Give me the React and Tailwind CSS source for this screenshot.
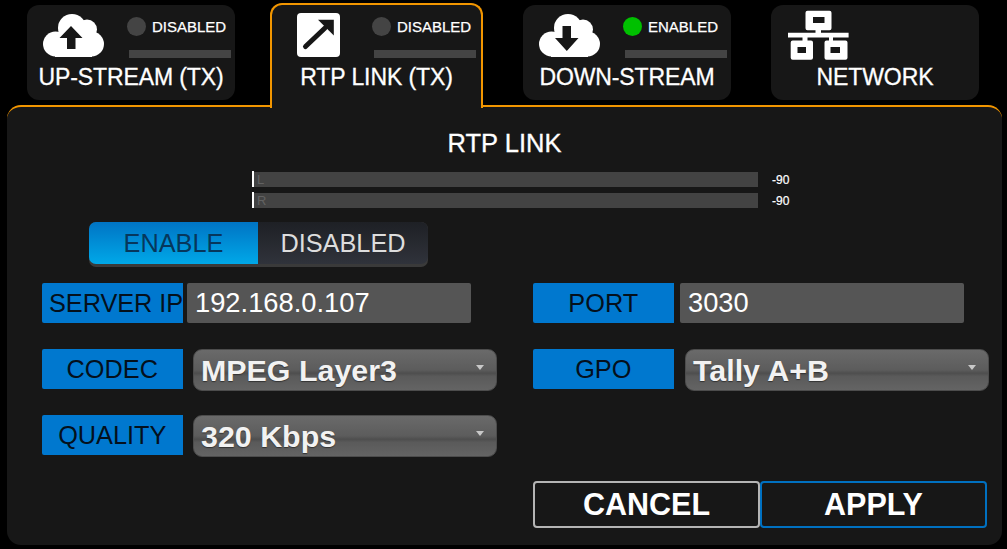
const Cloud = ({ down }) => (
  <svg width="61" height="43" viewBox="0 0 61 43">
    <g fill="#fff">
      <circle cx="29" cy="14" r="14" />
      <circle cx="44" cy="15.5" r="10" />
      <circle cx="12.5" cy="30" r="12.5" />
      <circle cx="48.5" cy="30" r="12.5" />
      <rect x="12" y="18" width="37" height="25" />
    </g>
    <path
      fill="#171717"
      d={
        down
          ? "M23.5 12h8.5v12h7.5L27.8 37 16 24h7.5z"
          : "M28 12l11.5 12H32.5v11H24V24h-7.5z"
      }
    />
  </svg>
);

const ArrowBox = () => (
  <svg width="43" height="44" viewBox="0 0 43 44">
    <rect width="43" height="44" rx="4" fill="#fff" />
    <path d="M8.5 33.5L28 15" stroke="#171717" strokeWidth="5" strokeLinecap="round" fill="none" />
    <path d="M21 6.7h15.8v15.8z" fill="#171717" />
  </svg>
);

const NetworkIcon = () => (
  <svg width="61" height="50" viewBox="0 0 61 50">
    <path
      fill="#fff"
      fillRule="evenodd"
      d="M19.5 0.7h22a2 2 0 0 1 2 2v15.5a2 2 0 0 1-2 2H33v2.6h27.6v4.6H45v3h12.5a2 2 0 0 1 2 2v15.3a2 2 0 0 1-2 2h-19a2 2 0 0 1-2-2V32.4a2 2 0 0 1 2-2H41v-3H19.5v3h3.5a2 2 0 0 1 2 2v15.3a2 2 0 0 1-2 2H4.7a2 2 0 0 1-2-2V32.4a2 2 0 0 1 2-2H14.5v-3H0v-4.6h27.5v-2.6h-8a2 2 0 0 1-2-2V2.7a2 2 0 0 1 2-2zM25 7v6h11.5V7zM9.5 37v6h8.5v-6zM42.5 37v6h9.5v-6z"
    />
  </svg>
);

const Status = ({ on, label }) => (
  <div className="flex flex-col">
    <div className="flex items-center h-[19px]">
      <span className={`w-[19px] h-[19px] rounded-full ${on ? "bg-[#00c000]" : "bg-[#444444]"}`} />
      <span className="ml-[6px] text-[15px] leading-[19px] text-white whitespace-nowrap [-webkit-text-stroke:0.25px_#fff]">{label}</span>
    </div>
    <div className="mt-[14px] ml-[2px] w-[102px] h-[8px] bg-[#444444]" />
  </div>
);

const TabTitle = ({ children, className }) => (
  <div className={`text-[23px] leading-[30px] tracking-[-0.1px] text-white text-center whitespace-nowrap [-webkit-text-stroke:0.3px_#fff] ${className}`}>
    {children}
  </div>
);

const Tab = ({ icon, status, on, label }) => (
  <div className="w-[208px] h-[95px] mt-[5px] rounded-[12px] bg-[#171717] flex flex-col">
    <div className="h-[54px] pt-[12px] flex">
      <div className="ml-[16px] w-[84px] h-[43px] shrink-0 -mt-[3px]">{icon}</div>
      {status && <Status on={on} label={status} />}
    </div>
    <TabTitle className="mt-[3px]">{label}</TabTitle>
  </div>
);

const Label = ({ children, className = "" }) => (
  <div className={`w-[140.5px] h-[40px] shrink-0 rounded-l-[2px] bg-[#0078cf] text-[#04101c] text-[25.3px] leading-[40px] text-center whitespace-nowrap ${className}`}>
    {children}
  </div>
);

const Input = ({ value, className }) => (
  <input
    readOnly
    value={value}
    className={`w-[284px] h-[40px] rounded-[2px] bg-[#555555] text-white text-[27.3px] pl-[8px] outline-none border-0 ${className}`}
  />
);

const Select = ({ value, className = "" }) => (
  <div className={`relative w-[304px] h-[42px] rounded-[9px] border border-[#4c4c4c] bg-[linear-gradient(to_bottom,#6a6a6a_0%,#5c5c5c_50%,#4e4e4e_58%,#5a5a5a_66%,#646464_100%)] text-[#f2f2f2] text-[30.4px] leading-[41px] font-bold pl-[7px] whitespace-nowrap [text-shadow:0_1px_1px_#333] ${className}`}>
    {value}
    <span className="absolute right-[12px] top-[15px] w-0 h-0 border-l-[4.5px] border-r-[4.5px] border-t-[5px] border-l-transparent border-r-transparent border-t-[#c8c8c8]" />
  </div>
);

const Meter = ({ ch }) => (
  <div className="flex items-center h-[16px]">
    <div className="w-[2px] h-[16px] bg-white" />
    <div className="w-[504px] h-[15px] bg-[#434343] text-[#626262] text-[13px] leading-[15px] pl-[3px]">{ch}</div>
    <div className="ml-[14px] text-white text-[12px] leading-[15px] mt-[2px] [-webkit-text-stroke:0.2px_#fff]">-90</div>
  </div>
);

export default function App() {
  return (
    <div className="w-[1007px] h-[549px] bg-black overflow-hidden font-['Liberation_Sans',Arial,sans-serif]">
      <div className="h-[105px] pl-[27px] flex items-start">
        <Tab icon={<Cloud />} status="DISABLED" label="UP-STREAM (TX)" />
        <div className="relative z-10 ml-[35px] w-[213px] h-[105px] mt-[3px] rounded-t-[12px] border-2 border-b-0 border-[#f29600] bg-[#171717] flex flex-col">
          <div className="h-[52px] pt-[8px] flex">
            <div className="ml-[25px] w-[75px] shrink-0">
              <ArrowBox />
            </div>
            <div className="mt-[4px]">
              <Status label="DISABLED" />
            </div>
          </div>
          <TabTitle className="mt-[5px]">RTP LINK (TX)</TabTitle>
        </div>
        <div className="ml-[40px]">
          <Tab icon={<Cloud down />} status="ENABLED" on label="DOWN-STREAM" />
        </div>
        <div className="ml-[40px]">
          <Tab icon={<div className="ml-[1px] -mt-[4px]"><NetworkIcon /></div>} label="NETWORK" />
        </div>
      </div>

      <div className="ml-[7px] w-[995px] h-[440px] rounded-[14px] border-t-2 border-[#f29600] bg-[#171717] flex flex-col">
        <div className="mt-[21px] text-center text-white text-[25.5px] leading-[30px] [-webkit-text-stroke:0.3px_#fff]">RTP LINK</div>
        <div className="mt-[13px] ml-[245px] flex flex-col gap-[5px]">
          <Meter ch="L" />
          <Meter ch="R" />
        </div>
        <div className="mt-[14px] ml-[82px] w-[339px] h-[45px] rounded-[7px] bg-[#3a3a3a] pb-[3px] flex">
          <div className="w-[169px] rounded-l-[7px] bg-[linear-gradient(to_bottom,#0074c4,#00a8e8)] text-[#06375c] text-[25.3px] leading-[42px] text-center">ENABLE</div>
          <div className="flex-1 rounded-r-[7px] bg-[linear-gradient(to_bottom,#1e2025,#30333b)] text-[#dddddd] text-[25.3px] leading-[42px] text-center">DISABLED</div>
        </div>
        <div className="mt-[16px] ml-[35px] grid grid-cols-[491px_1fr] gap-y-[26px]">
          <div className="flex">
            <Label className="pl-[7px] text-left tracking-[-0.05px]">SERVER IP</Label>
            <Input value="192.168.0.107" className="ml-[4.5px]" />
          </div>
          <div className="flex">
            <Label>PORT</Label>
            <Input value="3030" className="ml-[6.5px] w-[283px]" />
          </div>
          <div className="flex h-[40px]">
            <Label>CODEC</Label>
            <Select value="MPEG Layer3" className="ml-[10.5px]" />
          </div>
          <div className="flex h-[40px]">
            <Label>GPO</Label>
            <Select value="Tally A+B" className="ml-[11.5px]" />
          </div>
          <div className="flex h-[40px]">
            <Label>QUALITY</Label>
            <Select value="320 Kbps" className="ml-[10.5px]" />
          </div>
        </div>
        <div className="mt-[26px] ml-[526px] flex">
          <button className="w-[227px] h-[47px] rounded-[4px] border-2 border-[#b4b4b4] text-white text-[30.5px] font-bold leading-none">CANCEL</button>
          <button className="w-[227px] h-[47px] rounded-[4px] border-2 border-[#0070c0] text-white text-[30.5px] font-bold leading-none">APPLY</button>
        </div>
      </div>
    </div>
  );
}
